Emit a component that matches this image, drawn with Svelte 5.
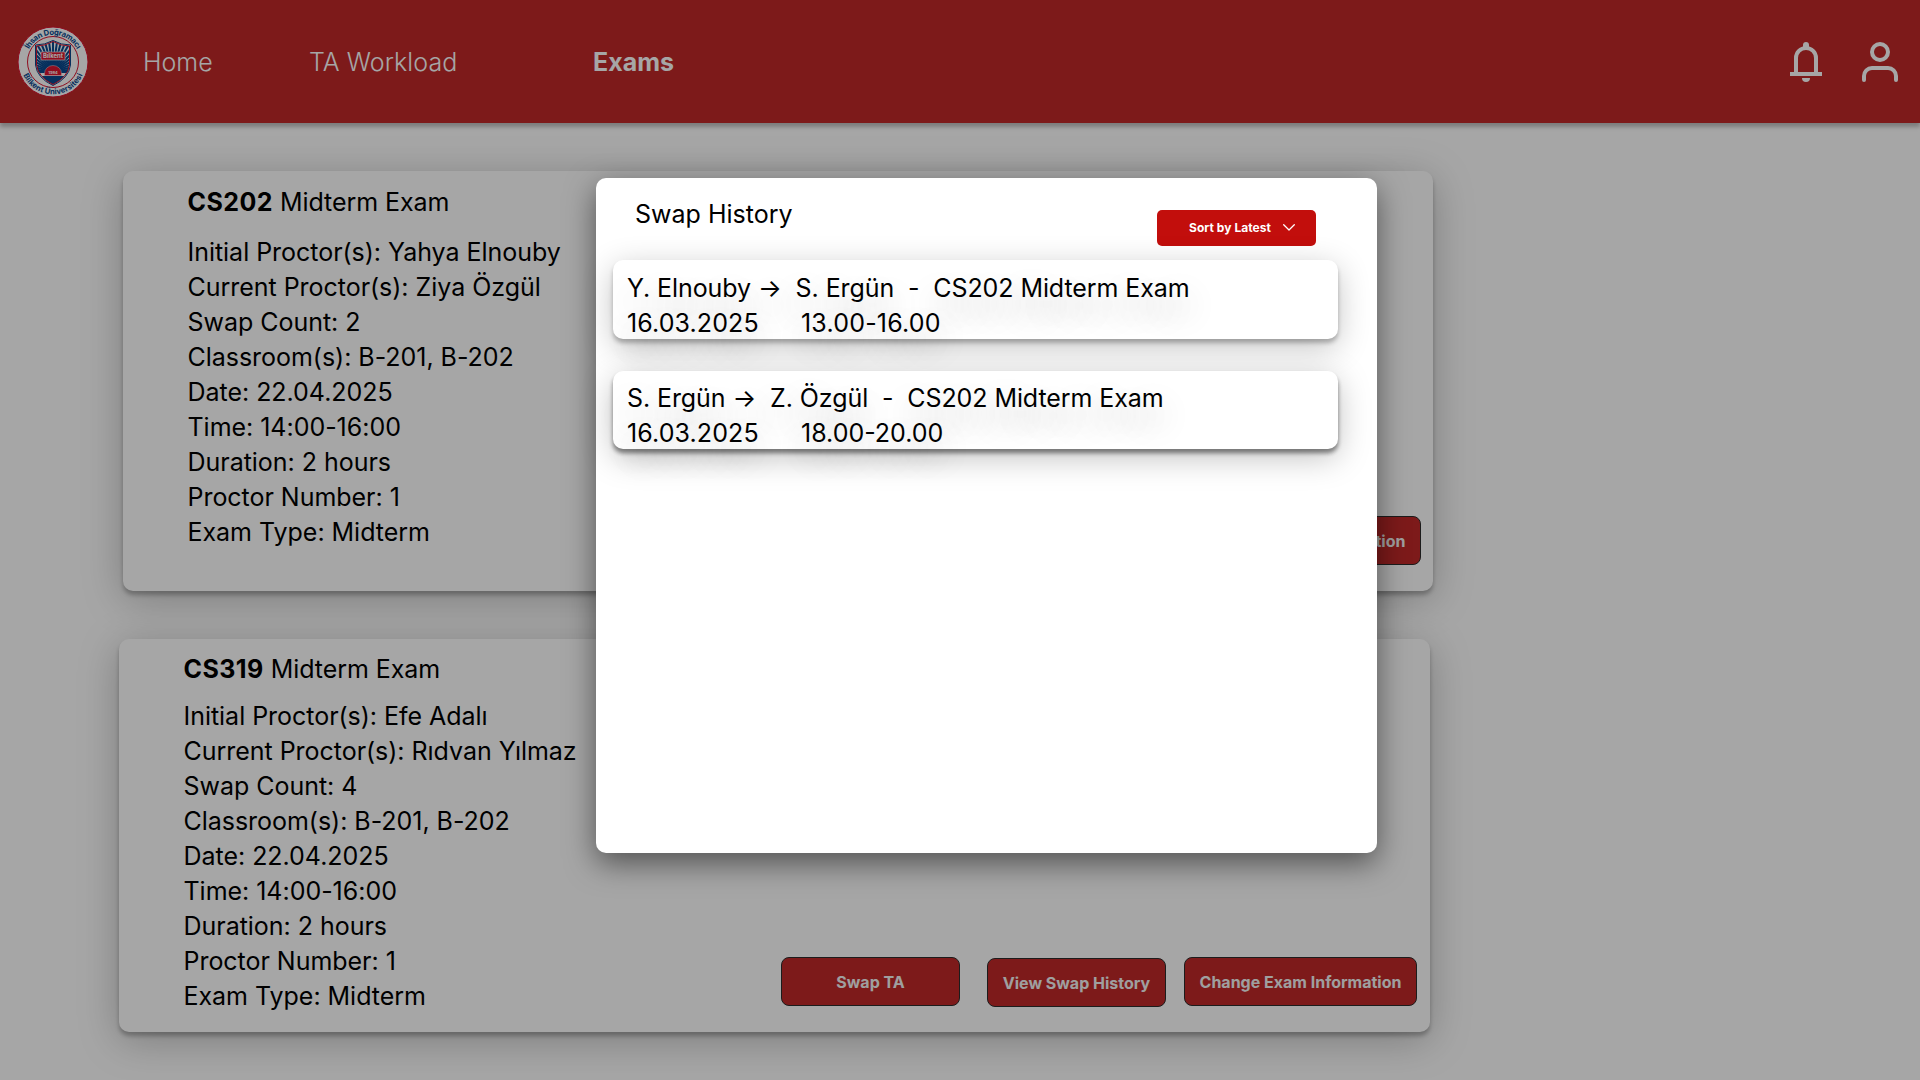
<script>
  const navItems = [
    { label: 'Home', key: 'home' },
    { label: 'TA Workload', key: 'workload' },
    { label: 'Exams', key: 'exams', active: true }
  ];

  const exams = [
    {
      code: 'CS202',
      slot: 'first',
      details: [
        'Initial Proctor(s): Yahya Elnouby',
        'Current Proctor(s): Ziya Özgül',
        'Swap Count: 2',
        'Classroom(s): B-201, B-202',
        'Date: 22.04.2025',
        'Time: 14:00-16:00',
        'Duration: 2 hours',
        'Proctor Number: 1',
        'Exam Type: Midterm'
      ]
    },
    {
      code: 'CS319',
      slot: 'second',
      details: [
        'Initial Proctor(s): Efe Adalı',
        'Current Proctor(s): Rıdvan Yılmaz',
        'Swap Count: 4',
        'Classroom(s): B-201, B-202',
        'Date: 22.04.2025',
        'Time: 14:00-16:00',
        'Duration: 2 hours',
        'Proctor Number: 1',
        'Exam Type: Midterm'
      ]
    }
  ];

  const swaps = [
    { from: 'Y. Elnouby', to: 'S. Ergün', exam: 'CS202 Midterm Exam', date: '16.03.2025', time: '13.00-16.00' },
    { from: 'S. Ergün', to: 'Z. Özgül', exam: 'CS202 Midterm Exam', date: '16.03.2025', time: '18.00-20.00' }
  ];

  // Rays fanning out from the sun at the bottom of the crest
  const rays = Array.from({ length: 25 }, (_, i) => {
    const a = Math.PI + (Math.PI * i) / 24;
    return { x: 36 + Math.cos(a) * 40, y: 46 + Math.sin(a) * 40 };
  });
</script>

<div class="page">
  <header>
    <svg class="logo" viewBox="0 0 72 72" width="72" height="72">
      <defs>
        <path id="arc-top" d="M8.800 36a27.200 27.200 0 0 1 54.400 0" />
        <path id="arc-bottom" d="M3.600 36a32.400 32.400 0 0 0 64.800 0" />
        <clipPath id="crest"><path d="M36 15.5Q44 20 52.500 20V39Q51 51 36 58.500Q21 51 19.500 39V20Q28 20 36 15.500Z" /></clipPath>
      </defs>
      <circle cx="36" cy="36" r="35" fill="#fff" stroke="#dc1430" stroke-width="1" />
      <circle cx="36" cy="36" r="25.500" fill="none" stroke="#dc1430" stroke-width="1" />
      <text class="seal"><textPath href="#arc-top" startOffset="50%" text-anchor="middle" textLength="59">İhsan Doğramacı</textPath></text>
      <text class="seal"><textPath href="#arc-bottom" startOffset="50%" text-anchor="middle" textLength="75">Bilkent Üniversitesi</textPath></text>
      <path d="M36 14.500Q44 19 53.500 19V39Q52 52 36 59.500Q20 52 18.500 39V19Q28 19 36 14.500Z" fill="#fff" stroke="#0a4a8f" stroke-width="1" />
      <g clip-path="url(#crest)">
        {#each rays as ray}
          <line x1="36" y1="46" x2={ray.x} y2={ray.y} stroke="#0a4a8f" stroke-width="2" />
        {/each}
        <rect x="18" y="50" width="36" height="10" fill="#0a4a8f" />
      </g>
      <path d="M36 15.500Q44 20 52.500 20V39Q51 51 36 58.500Q21 51 19.500 39V20Q28 20 36 15.500Z" fill="none" stroke="#dc1430" stroke-width="1" />
      <path d="M27.500 49.500v-2a8.500 8 0 0 1 17 0v2Z" fill="#dc1430" stroke="#fff" stroke-width=".4" />
      <text class="year" x="36" y="47.500" text-anchor="middle">1984</text>
      <rect x="24" y="26" width="24" height="8" fill="#dc1430" stroke="#fff" stroke-width=".6" />
      <text class="crest-name" x="36" y="32.200" text-anchor="middle">Bilkent</text>
    </svg>
    <nav>
      {#each navItems as item}
        <a class={item.key} class:active={item.active}>{item.label}</a>
      {/each}
    </nav>
    <div class="tools">
      <svg viewBox="0 0 32 40" width="32" height="40" fill="none">
        <path d="M6 31V16a10 10 0 0 1 20 0v15" stroke="#fff" stroke-width="4" />
        <path d="M0 30h32v4H0Z" fill="#fff" />
        <path d="M13 6V3a3 3 0 0 1 6 0v3Z" fill="#fff" />
        <path d="M12 36h8a4 4 0 0 1-8 0Z" fill="#fff" />
      </svg>
      <svg viewBox="0 0 36 40" width="36" height="40" fill="none" stroke="#fff" stroke-width="4">
        <circle cx="18" cy="10" r="8" />
        <path d="M2 38v-4a8 8 0 0 1 8-8h16a8 8 0 0 1 8 8v4" stroke-linecap="round" />
      </svg>
    </div>
  </header>

  <main>
    {#each exams as exam}
      <section class="card {exam.slot}">
        <h2><b>{exam.code}</b> Midterm Exam</h2>
        <ul>
          {#each exam.details as line}
            <li>{line}</li>
          {/each}
        </ul>
        <div class="actions">
          <button>Swap TA</button>
          <button class="view">View Swap History</button>
          <button class="change">Change Exam Information</button>
        </div>
      </section>
    {/each}
  </main>

  <div class="backdrop">
    <div class="modal">
      <div class="modal-head">
        <h1>Swap History</h1>
        <button class="sort">
          <span>Sort by Latest</span>
          <svg viewBox="0 0 12 7" width="12" height="7" fill="none" stroke="#fff" stroke-width="1.300" stroke-linecap="round" stroke-linejoin="round">
            <path d="M.7.800 6 6 11.300.800" />
          </svg>
        </button>
      </div>
      <div class="swaps">
        {#each swaps as swap}
          <article>
            <p class="who">{`${swap.from} →  ${swap.to}  -  ${swap.exam}`}</p>
            <p class="when"><span class="date">{swap.date}</span><span class="time">{swap.time}</span></p>
          </article>
        {/each}
      </div>
    </div>
  </div>
</div>

<style>
  :global(body) {
    margin: 0;
    overflow: hidden;
  }
  .page {
    position: relative;
    width: 1920px;
    height: 1080px;
    overflow: hidden;
    background: #fff;
    color: #000;
    font: 400 25px/35px Inter, sans-serif;
  }
  h1, h2, p, ul {
    margin: 0;
    padding: 0;
    font-size: inherit;
    font-weight: inherit;
    list-style: none;
    white-space: pre;
  }
  h2 {
    letter-spacing: -0.07px;
  }
  b {
    font-weight: 700;
    letter-spacing: 0.45px;
  }
  li {
    letter-spacing: -0.03px;
  }
  header {
    display: flex;
    align-items: center;
    box-sizing: border-box;
    height: 123px;
    padding: 0 22px 0 17px;
    background: #c02828;
    color: #fff;
    box-shadow: 0 4px 4px rgba(0, 0, 0, 0.25);
  }
  .seal {
    font: 700 7.700px Inter, sans-serif;
    fill: #0a4a8f;
  }
  .year {
    font: 700 4px Inter, sans-serif;
    fill: #fff;
  }
  .crest-name {
    font: 700 6px Inter, sans-serif;
    fill: #fff;
  }
  nav {
    display: flex;
    margin: 2px 0 0 54px;
    font-weight: 300;
  }
  .home {
    width: 166px;
  }
  .workload {
    width: 284px;
    letter-spacing: 0.08px;
  }
  .active {
    font-weight: 700;
  }
  .tools {
    display: flex;
    gap: 40px;
    margin-left: auto;
  }
  main {
    display: flex;
    flex-direction: column;
    gap: 48px;
    padding: 48px 0 0 119px;
  }
  .card {
    display: flex;
    flex-direction: column;
    box-sizing: border-box;
    width: 1311px;
    height: 393px;
    padding: 13px 13px 26px 64.500px;
    border-radius: 10px;
    background: #fff;
    box-shadow: 0 4px 4px rgba(0, 0, 0, 0.25), 0 8px 40px rgba(0, 0, 0, 0.25);
  }
  .card ul {
    height: 0;
    margin-top: 12px;
  }
  .first {
    width: 1310px;
    height: 420px;
    margin-left: 4px;
    padding: 14px 12px 26px 64.500px;
  }
  .first ul {
    margin-top: 15px;
  }
  .actions {
    display: flex;
    justify-content: flex-end;
    margin-top: auto;
  }
  button {
    box-sizing: border-box;
    width: 179px;
    height: 49px;
    padding: 0;
    border: 1px solid #2c2c2c;
    border-radius: 8px;
    background: #c02828;
    color: #f5f5f5;
    font: 700 16px/16px Inter, sans-serif;
    white-space: nowrap;
  }
  .view {
    margin: 1px 18px -1px 27px;
  }
  .change {
    width: 233px;
  }
  .backdrop {
    position: absolute;
    inset: 0;
    background: rgba(0, 0, 0, 0.35);
    padding: 178px 0 0 596px;
  }
  .modal {
    box-sizing: border-box;
    width: 781px;
    height: 675px;
    padding: 19px 39px 0 17px;
    border-radius: 10px;
    background: #fff;
    box-shadow: 0 10px 30px rgba(0, 0, 0, 0.5);
  }
  .modal-head {
    display: flex;
    justify-content: space-between;
    height: 63px;
    padding: 0 22px 0 22px;
  }
  .sort {
    display: flex;
    align-items: center;
    gap: 12px;
    width: 159px;
    height: 36.500px;
    margin-top: 12.700px;
    padding-left: 32px;
    border: 0;
    border-radius: 5px;
    background: #c20e0c;
    color: #fff;
    font-size: 12px;
    font-weight: 700;
    letter-spacing: 0.05px;
  }
  .swaps {
    display: flex;
    flex-direction: column;
    gap: 32px;
  }
  article {
    box-sizing: border-box;
    height: 78.500px;
    padding: 11px 0 0 14px;
    border-radius: 10px;
    background: #fff;
    box-shadow: 0 4px 4px rgba(0, 0, 0, 0.25), 0 8px 32px rgba(0, 0, 0, 0.24);
    text-shadow: 0 16px 32px rgba(0, 0, 0, 0.3);
  }
  article:last-child {
    padding-top: 10px;
    box-shadow: 0 4px 4px rgba(0, 0, 0, 0.25), 0 4px 4px rgba(0, 0, 0, 0.25), 0 8px 32px rgba(0, 0, 0, 0.25);
  }
  .who {
    letter-spacing: -0.085px;
  }
  .when {
    display: flex;
  }
  .date {
    width: 174px;
    letter-spacing: 0.1px;
  }
  .time {
    letter-spacing: 0.2px;
  }
  article:last-child .time {
    letter-spacing: 0;
  }
</style>
